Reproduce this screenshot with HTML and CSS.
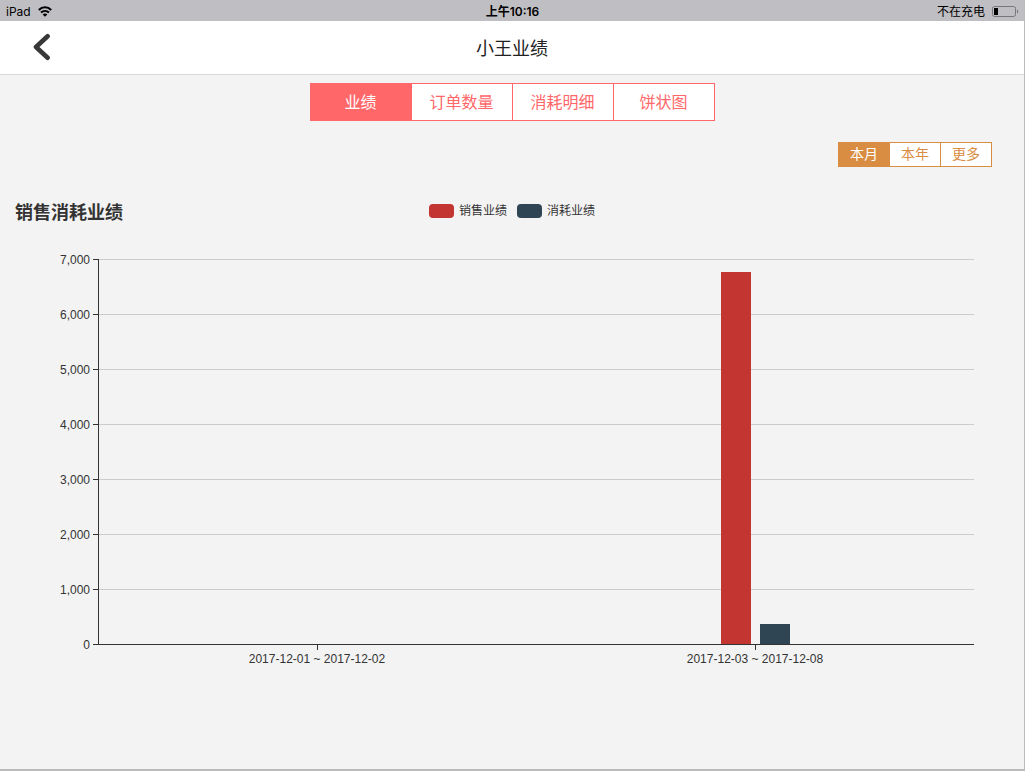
FILE: index.html
```html
<!DOCTYPE html>
<html lang="zh-CN">
<head>
    <meta charset="UTF-8">
    <meta name="viewport" content="width=device-width, initial-scale=1.0">
    <title>小王业绩</title>
    <link rel="stylesheet" href="styles.css">
</head>
<body>
    <div class="page">
        <div class="status-bar">
            <div class="status-left">
                <span>iPad</span>
                <svg class="wifi" width="14" height="11" viewBox="0 0 14 11" fill="none" stroke="#000" stroke-width="2.1">
                    <path d="M0.8 4C4.4 0.4 9.6 0.4 13.2 4"/>
                    <path d="M3 6.6C5.3 4.4 8.7 4.4 11 6.6"/>
                    <path d="M7 10.7L4.7 8.4C6 7.2 8 7.2 9.3 8.4Z" fill="#000" stroke="none"/>
                </svg>
            </div>
            <div class="status-time">上午10:16</div>
            <div class="status-right">
                <span>不在充电</span>
                <svg width="27" height="12" viewBox="0 0 27 12">
                    <rect x="0.5" y="0.5" width="23" height="10" rx="2" fill="none" stroke="#77767b"/>
                    <rect x="2" y="2" width="4" height="7" fill="#000"/>
                    <path d="M25 3.5C26.6 4.1 26.6 6.9 25 7.5Z" fill="#77767b"/>
                </svg>
            </div>
        </div>

        <header class="header">
            <button type="button" class="back" aria-label="返回">
                <svg width="19" height="28" viewBox="0 0 19 28" fill="none" stroke="#383838" stroke-width="4.6" stroke-linecap="round" stroke-linejoin="round">
                    <path d="M15.6 3.2L4 14L15.6 24.8"/>
                </svg>
            </button>
            <h1>小王业绩</h1>
        </header>

        <nav class="tabs">
            <button type="button" class="tab active">业绩</button>
            <button type="button" class="tab">订单数量</button>
            <button type="button" class="tab">消耗明细</button>
            <button type="button" class="tab">饼状图</button>
        </nav>

        <div class="range">
            <button type="button" class="range-item active">本月</button>
            <button type="button" class="range-item">本年</button>
            <button type="button" class="range-item">更多</button>
        </div>

        <section class="chart">
            <div class="chart-head">
                <h2>销售消耗业绩</h2>
                <div class="legend">
                    <span class="legend-item"><i class="swatch sales"></i>销售业绩</span>
                    <span class="legend-item"><i class="swatch cost"></i>消耗业绩</span>
                </div>
            </div>

            <div class="chart-body">
                <div class="y-axis">
                    <div class="y-label">7,000</div>
                    <div class="y-label">6,000</div>
                    <div class="y-label">5,000</div>
                    <div class="y-label">4,000</div>
                    <div class="y-label">3,000</div>
                    <div class="y-label">2,000</div>
                    <div class="y-label">1,000</div>
                    <div class="y-label">0</div>
                </div>
                <div class="grid-lines">
                    <div class="line"></div>
                    <div class="line"></div>
                    <div class="line"></div>
                    <div class="line"></div>
                    <div class="line"></div>
                    <div class="line"></div>
                    <div class="line"></div>
                </div>
                <div class="bars">
                    <div class="bar-group">
                        <div class="bar sales" style="height: 0%"></div>
                        <div class="bar cost" style="height: 0%"></div>
                    </div>
                    <div class="bar-group">
                        <div class="bar sales" style="height: 96.7%"></div>
                        <div class="bar cost" style="height: 5.3%"></div>
                    </div>
                </div>
                <div class="x-axis">
                    <div class="x-label">2017-12-01 ~ 2017-12-02</div>
                    <div class="x-label">2017-12-03 ~ 2017-12-08</div>
                </div>
            </div>
        </section>
    </div>
</body>
</html>
```

FILE: styles.css
```css
* {
    box-sizing: border-box;
}

body {
    margin: 0;
    padding: 0 1px 2px 0;
    min-height: 100vh;
    display: flex;
    background: #bbb;
    font-family: "Liberation Sans", "Noto Sans CJK SC", sans-serif;
    color: #333;
}

h1, h2 {
    margin: 0;
}

button {
    margin: 0;
    padding: 0;
    border: 0;
    background: none;
    font-family: inherit;
    cursor: pointer;
}

.page {
    flex: 1;
    background: #f3f3f3;
}

/* Status bar */
.status-bar {
    display: grid;
    grid-template-columns: 1fr auto 1fr;
    align-items: center;
    height: 21px;
    padding: 2px 5px 0 6px;
    background: #bfbec3;
    color: #000;
    font-family: Inter, "Noto Sans CJK SC", sans-serif;
    font-size: 12px;
    line-height: 19px;
}

.status-left,
.status-right {
    display: flex;
    align-items: center;
    gap: 7px;
}

.status-right {
    justify-content: flex-end;
}

.status-time {
    font-weight: 600;
}

/* Header */
.header {
    display: grid;
    grid-template-columns: 1fr auto 1fr;
    align-items: center;
    height: 54px;
    padding: 0 32px 2px;
    background: #fff;
    border-bottom: 1px solid #d9d9d9;
}

.header h1 {
    font-size: 18px;
    font-weight: 400;
    color: #222;
}

.back {
    display: flex;
    justify-self: start;
}

/* Tabs */
.tabs {
    display: flex;
    width: fit-content;
    margin: 8px auto 0;
    border: 1px solid #ff6769;
    border-right: 0;
}

.tab {
    width: 101px;
    height: 36px;
    padding-bottom: 2px;
    border-right: 1px solid #ff6769;
    background: #fff;
    color: #ff6769;
    font-size: 16px;
}

.tab.active {
    background: #ff6769;
    color: #fff;
}

.range {
    display: flex;
    width: fit-content;
    margin: 21px 32px 0 auto;
    border: 1px solid #d98d42;
    border-right: 0;
}

.range-item {
    width: 51px;
    height: 23px;
    border-right: 1px solid #d98d42;
    background: #fff;
    color: #d98d42;
    font-size: 14px;
    line-height: 21px;
}

.range-item.active {
    background: #d98d42;
    color: #fff;
}

/* Chart */
.chart {
    margin-top: 33px;
    font-size: 12px;
}

.chart-head {
    display: grid;
    grid-template-columns: 1fr auto 1fr;
    margin: 0 15px 6px;
}

.chart-head h2 {
    font-size: 18px;
    font-weight: 700;
    line-height: 26px;
}

.legend {
    display: flex;
    gap: 10px;
    height: 22px;
    line-height: 16px;
}

.legend-item {
    display: flex;
    align-items: center;
    gap: 5px;
}

.swatch {
    width: 25px;
    height: 14px;
    border-radius: 4px;
}

.sales {
    background: #c23531;
}

.cost {
    background: #2f4554;
}

.chart-body {
    display: grid;
    grid-template-columns: 98px 1fr;
    grid-template-rows: auto 1fr;
    padding-right: 50px;
}

.y-axis {
    grid-area: 1 / 1 / 3 / 2;
}

.y-label {
    display: flex;
    align-items: center;
    justify-content: flex-end;
    gap: 3px;
    height: 55px;
}

.y-label::after {
    content: "";
    width: 5px;
    height: 1px;
    background: #333;
}

/* the bars share one cell with the grid lines */
.grid-lines,
.bars {
    grid-area: 1 / 2 / 2 / 3;
    margin-top: 27px;
    border-left: 1px solid #333;
    border-bottom: 1px solid #333;
}

.line {
    height: 55px;
    border-top: 1px solid #ccc;
}

.bars {
    display: flex;
}

.bar-group {
    flex: 1;
    display: flex;
    align-items: flex-end;
    justify-content: center;
    gap: 9px;
}

.bar {
    width: 30px;
}

.x-axis {
    grid-area: 2 / 2 / 3 / 3;
    display: flex;
}

.x-label {
    flex: 1;
    display: flex;
    flex-direction: column;
    align-items: center;
    gap: 1px;
    line-height: 16px;
}

.x-label::before {
    content: "";
    width: 1px;
    height: 5px;
    background: #333;
}
```
